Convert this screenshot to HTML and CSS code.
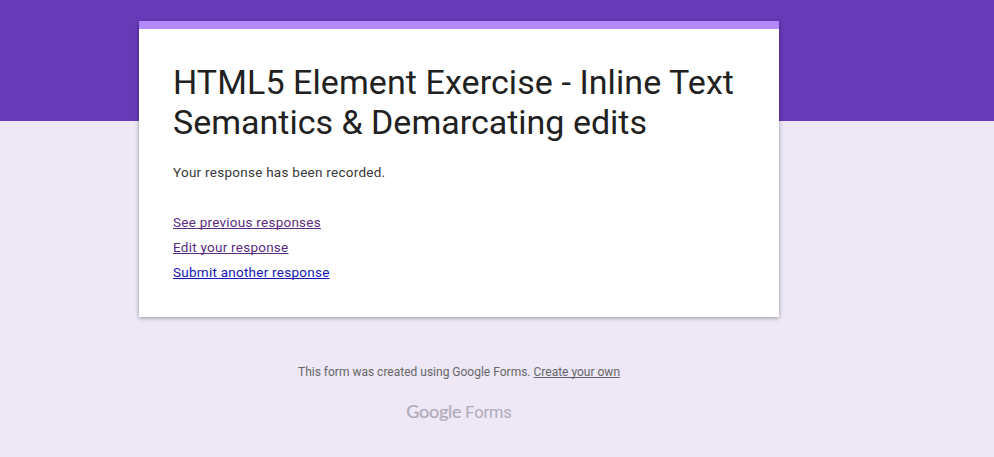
FILE: index.html
```html
<!DOCTYPE html>
<html lang="en">
<head>
<meta charset="utf-8">
<title>HTML5 Element Exercise</title>
<link rel="stylesheet" href="styles.css">
</head>
<body>
<main class="card">
<h1 class="title"><span class="lead">HTML5 Element Exercise - Inline Text</span> Semantics &amp; Demarcating edits</h1>
<p class="message">Your response has been recorded.</p>
<nav class="links">
<a class="link visited" href="#previous">See previous responses</a>
<a class="link visited" href="#edit">Edit your response</a>
<a class="link" href="#another">Submit another response</a>
</nav>
</main>
<footer class="footer">
<p class="credit">This form was created using Google Forms. <a class="create" href="#create">Create your own</a></p>
<div class="logo"><span class="google">Google</span><span class="forms">Forms</span></div>
</footer>
</body>
</html>
```
FILE: styles.css
```css
* { box-sizing: border-box; }
body {
  margin: 0;
  height: 457px;
  padding-top: 21px;
  overflow: hidden;
  background: linear-gradient(#673ab7 0 121px, #ede7f6 121px);
  font-family: Roboto, sans-serif;
}
.card {
  width: 640px;
  height: 296px;
  margin-left: 139px;
  padding: 33px 34px 0;
  border-top: 8px solid #b388ff;
  background: #fff;
  box-shadow: 0 1px 4px rgba(0, 0, 0, .37);
}
.title {
  margin: 0;
  font-size: 34px;
  font-weight: 400;
  line-height: 40px;
  color: #212121;
}
.lead { letter-spacing: .08px; }
.message {
  margin: 20px 0 0;
  font-size: 13.5px;
  line-height: 20px;
  letter-spacing: .26px;
  color: #383838;
}
.links {
  display: flex;
  flex-direction: column;
  align-items: flex-start;
  margin-top: 28px;
}
.link {
  font-size: 13.5px;
  line-height: 25px;
  letter-spacing: .25px;
  color: #1616b8;
  text-decoration-skip-ink: none;
}
.visited { color: #5b2d80; }
.footer {
  width: 640px;
  margin: 45px 0 0 139px;
  text-align: center;
}
.credit {
  margin: 0;
  font-size: 12px;
  line-height: 20px;
  color: #666;
}
.create { color: inherit; text-decoration-skip-ink: none; }
.logo {
  display: flex;
  justify-content: center;
  align-items: baseline;
  gap: 4px;
  margin-top: 18px;
  line-height: 22px;
  color: #b0aab8;
}
.google {
  font-family: Lato, sans-serif;
  font-size: 18px;
  letter-spacing: -.25px;
  -webkit-text-stroke: .2px #b0aab8;
}
.forms { font-size: 16.5px; letter-spacing: -.1px; }
```
